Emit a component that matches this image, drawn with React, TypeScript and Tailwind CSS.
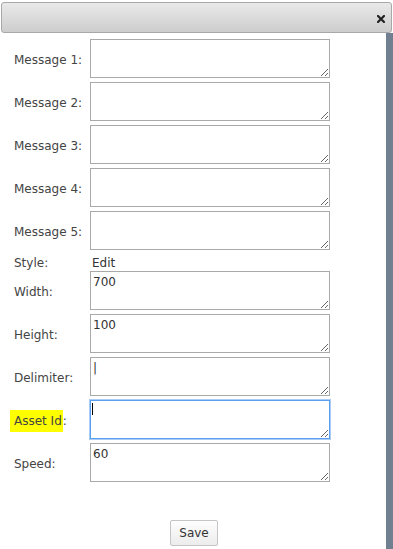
import React from "react";

const font = { fontFamily: '"DejaVu Sans", Verdana, sans-serif' };

function Field({ label, value, focused, highlight }: { label: string; value?: string; focused?: boolean; highlight?: boolean }) {
  return (
    <div className="flex items-center h-[39px] mb-[4px]">
      <div className="w-[76px] pt-[3px] text-[12px] text-[#444]">
        {highlight ? (
          <>
            <span className="bg-[#ffff00] -ml-[4px] pl-[4px] pr-[1px] py-[4px]">{label}</span>:
          </>
        ) : (
          label + ":"
        )}
      </div>
      <div className="relative">
        <textarea
          readOnly
          defaultValue={value ?? ""}
          className={
            "block w-[240px] h-[39px] px-[2px] py-[1px] text-[12px] text-[#333] bg-white outline-none " +
            (focused
              ? "border border-[#5a9ef0] shadow-[0_0_0_1px_#a9cdf7]"
              : "border border-[#a9a9a9]")
          }
          style={font}
        />
        {focused && <span className="absolute left-[2px] top-[3px] w-[1px] h-[12px] bg-black" />}
      </div>
    </div>
  );
}

export default function App() {
  return (
    <div className="w-[393px] h-[549px] bg-white relative overflow-hidden" style={font}>
      <div className="mt-[2px] mx-[1px] h-[31px] rounded-[3px] border border-[#a8a8a8] bg-gradient-to-b from-[#e9e9e9] to-[#cdcdcd] flex items-center justify-end pr-[6px]">
        <svg width="8" height="8" viewBox="0 0 8 8" className="mt-[2px]">
          <path d="M1 1 L7 7 M7 1 L1 7" stroke="#222" strokeWidth="2.2" strokeLinecap="square" />
        </svg>
      </div>
      <div className="flex h-[516px]">
        <div className="flex-1 flex flex-col pt-[6px] pl-[14px]">
          <Field label="Message 1" />
          <Field label="Message 2" />
          <Field label="Message 3" />
          <Field label="Message 4" />
          <Field label="Message 5" />
          <div className="flex items-center h-[17px] text-[12px] text-[#444]">
            <div className="w-[76px]">Style:</div>
            <div className="text-[#333] pl-[2px]">Edit</div>
          </div>
          <Field label="Width" value="700" />
          <Field label="Height" value="100" />
          <Field label="Delimiter" value="|" />
          <Field label="Asset Id" focused highlight />
          <Field label="Speed" value="60" />
          <div className="flex justify-center mt-[34px] pr-[12px]">
            <button className="w-[48px] h-[26px] rounded-[2px] border border-[#c5c5c5] bg-gradient-to-b from-[#fefefe] to-[#ececec] text-[12px] text-[#333]" style={font}>
              Save
            </button>
          </div>
        </div>
        <div className="w-[7px] bg-[#708090]" />
      </div>
    </div>
  );
}
